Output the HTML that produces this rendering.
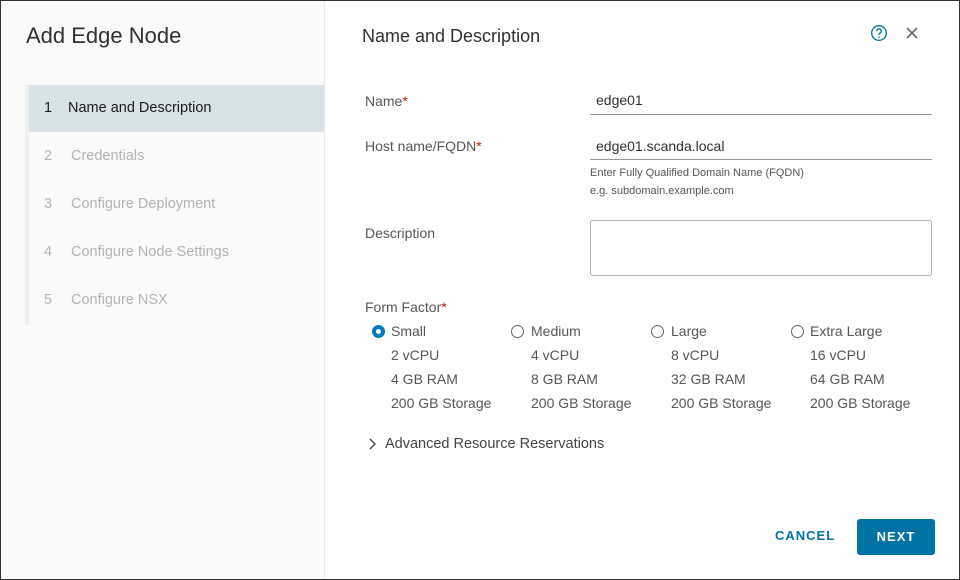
<!DOCTYPE html>
<html><head><style>
*{margin:0;padding:0;box-sizing:border-box}
body{width:960px;height:580px;overflow:hidden;font-family:"Liberation Sans",sans-serif;background:#fff;position:relative}
.frame{position:absolute;left:0;top:0;width:960px;height:580px;border:1px solid #333}
.left{position:absolute;left:1px;top:1px;width:324px;height:578px;background:#fafafa;border-right:1px solid #e8e8e8}
.t{position:absolute;font-size:14px;color:#565656;white-space:nowrap}
.nav{position:absolute;left:25px;top:85px;width:4px;height:240px;background:#eee}
.item{position:absolute;left:29px;width:295px;height:47px;font-size:14.5px;color:#b3b3b3;line-height:47px}
.item span{position:absolute;left:15px}
.item b{font-weight:normal;position:absolute;left:42px}
.line{position:absolute;left:590px;width:342px;height:1px;background:#9a9a9a}
.radio{position:absolute;width:13px;height:13px;border:1px solid #666;border-radius:50%}
</style></head><body>
<div class="left"></div>
<div class="frame"></div>
<div class="t" style="left:26px;top:23px;font-size:22px;color:#313131">Add Edge Node</div>
<div class="nav"></div>
<div class="item" style="top:85px;background:#d8e3e9;color:#1b1b1b"><span>1</span><b style="left:39px">Name and Description</b></div>
<div class="item" style="top:133px"><span>2</span><b>Credentials</b></div>
<div class="item" style="top:181px"><span>3</span><b>Configure Deployment</b></div>
<div class="item" style="top:229px"><span>4</span><b>Configure Node Settings</b></div>
<div class="item" style="top:277px"><span>5</span><b>Configure NSX</b></div>

<div class="t" style="left:362px;top:26px;font-size:18px;color:#313131">Name and Description</div>
<svg style="position:absolute;left:870px;top:24px" width="18" height="18" viewBox="0 0 18 18"><circle cx="9" cy="9" r="7.3" fill="none" stroke="#0072a3" stroke-width="1.3"/><path d="M6.8 7.2a2.2 2.2 0 1 1 3 2c-.6.3-.8.7-.8 1.3v.5" fill="none" stroke="#0072a3" stroke-width="1.3"/><circle cx="9" cy="13" r=".8" fill="#0072a3"/></svg>
<svg style="position:absolute;left:905px;top:26px" width="14" height="14" viewBox="0 0 14 14"><path d="M2 2L12 12M12 2L2 12" stroke="#666" stroke-width="1.6"/></svg>

<div class="t" style="left:365px;top:93px">Name<span style="color:#c21d00">*</span></div>
<div class="t" style="left:596px;top:92px;color:#313131">edge01</div>
<div class="line" style="top:114px"></div>
<div class="t" style="left:365px;top:138px">Host name/FQDN<span style="color:#c21d00">*</span></div>
<div class="t" style="left:596px;top:138px;color:#313131">edge01.scanda.local</div>
<div class="line" style="top:159px"></div>
<div class="t" style="left:590px;top:167px;font-size:11px">Enter Fully Qualified Domain Name (FQDN)</div>
<div class="t" style="left:590px;top:185px;font-size:11px">e.g. subdomain.example.com</div>
<div class="t" style="left:365px;top:225px">Description</div>
<div style="position:absolute;left:590px;top:220px;width:342px;height:56px;border:1px solid #b3b3b3;border-radius:3px"></div>

<div class="t" style="left:365px;top:299px">Form Factor<span style="color:#c21d00">*</span></div>
<div style="position:absolute;left:372px;top:325px;width:13px;height:13px;border-radius:50%;border:4px solid #0079b8;background:#fff"></div>
<div class="radio" style="left:511px;top:325px"></div>
<div class="radio" style="left:651px;top:325px"></div>
<div class="radio" style="left:791px;top:325px"></div>
<div class="t" style="left:391px;top:323px">Small</div>
<div class="t" style="left:391px;top:347px">2 vCPU</div>
<div class="t" style="left:391px;top:371px">4 GB RAM</div>
<div class="t" style="left:391px;top:395px">200 GB Storage</div>
<div class="t" style="left:531px;top:323px">Medium</div>
<div class="t" style="left:531px;top:347px">4 vCPU</div>
<div class="t" style="left:531px;top:371px">8 GB RAM</div>
<div class="t" style="left:531px;top:395px">200 GB Storage</div>
<div class="t" style="left:671px;top:323px">Large</div>
<div class="t" style="left:671px;top:347px">8 vCPU</div>
<div class="t" style="left:671px;top:371px">32 GB RAM</div>
<div class="t" style="left:671px;top:395px">200 GB Storage</div>
<div class="t" style="left:810px;top:323px">Extra Large</div>
<div class="t" style="left:810px;top:347px">16 vCPU</div>
<div class="t" style="left:810px;top:371px">64 GB RAM</div>
<div class="t" style="left:810px;top:395px">200 GB Storage</div>

<svg style="position:absolute;left:368px;top:437px" width="10" height="14" viewBox="0 0 10 14"><path d="M2 2L7 7L2 12" fill="none" stroke="#444" stroke-width="1.4"/></svg>
<div class="t" style="left:385px;top:436px;font-size:14.5px;color:#454545">Advanced Resource Reservations</div>

<div class="t" style="left:775px;top:528px;font-size:13px;font-weight:bold;letter-spacing:1px;color:#0072a3">CANCEL</div>
<div style="position:absolute;left:857px;top:519px;width:78px;height:36px;background:#0072a3;border-radius:3px;color:#fff;font-size:13px;font-weight:bold;letter-spacing:1px;text-align:center;line-height:36px">NEXT</div>
</body></html>
